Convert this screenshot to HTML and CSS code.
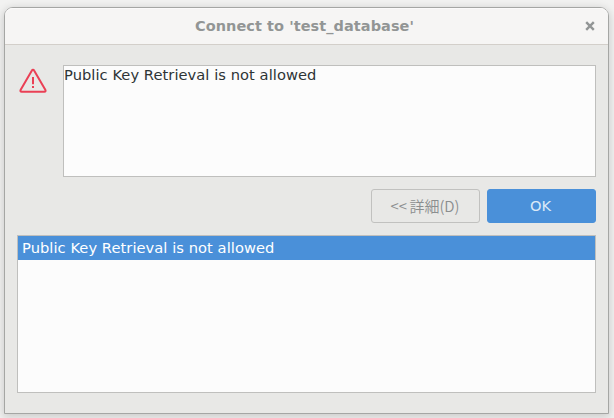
FILE: index.html
```html
<!DOCTYPE html>
<html lang="ja">
<head>
<meta charset="utf-8">
<title>Connect to 'test_database'</title>
<link rel="stylesheet" href="styles.css">
</head>
<body>
<div class="dialog">
  <header class="titlebar">
    <span class="title">Connect to 'test_database'</span>
    <button class="close" aria-label="Close">
      <svg width="10" height="10" viewBox="0 0 10 10"><path d="M1.2 1.2 8.8 8.8M8.8 1.2 1.2 8.8" fill="none" stroke="#929595" stroke-width="2.4"/></svg>
    </button>
  </header>
  <main class="content">
    <div class="message-row">
      <svg class="warning" width="30" height="30" viewBox="-1 -0.6 30 30">
        <path d="M15 4.1Q15.7 4.1 16.1 4.9L27.3 24.2Q28.2 26.1 26.3 26.1H3.7Q1.8 26.1 2.7 24.2L13.9 4.9Q14.3 4.1 15 4.1Z" fill="none" stroke="#ea4055" stroke-width="2" stroke-linejoin="round"/>
        <path d="M14 11.4h2v7.2h-2zM14 20.4h2v2h-2z" fill="#ea4055"/>
      </svg>
      <div class="message">Public Key Retrieval is not allowed</div>
    </div>
    <div class="actions">
      <button class="button details">&lt;&lt; 詳細(D)</button>
      <button class="button ok">OK</button>
    </div>
    <div class="list">
      <div class="item selected">Public Key Retrieval is not allowed</div>
    </div>
  </main>
</div>
</body>
</html>
```
FILE: styles.css
```css
* { box-sizing: border-box; }
body {
  margin: 0;
  padding: 7px 5px 4px 4px;
  height: 418px;
  overflow: hidden;
  background: #f2f2f1;
  font: 14.667px/18px "DejaVu Sans", "Noto Sans CJK JP", sans-serif;
  letter-spacing: 0.055px;
  color: #2e3436;
}
.dialog {
  height: 407px;
  display: flex;
  flex-direction: column;
  border: 1px solid #a5a6a4;
  border-radius: 9px 9px 0 0;
  background: #e8e8e6;
  box-shadow: 0 2px 8px 1px rgba(0, 0, 0, 0.16);
}
.titlebar {
  height: 37px;
  flex: none;
  display: grid;
  grid-template-columns: 30px 1fr 30px;
  align-items: center;
  padding-right: 3px;
  border-bottom: 1px solid #d3cfca;
  border-radius: 8px 8px 0 0;
  background: #f6f5f4;
  box-shadow: inset 0 1px #fbfafa;
}
.title {
  grid-column: 2;
  padding-right: 1px;
  text-align: center;
  font-weight: bold;
  font-size: 14.5px;
  color: #929595;
}
.close {
  display: flex;
  justify-content: center;
  padding: 0;
  border: 0;
  background: none;
}
.content {
  flex: 1;
  display: flex;
  flex-direction: column;
  padding: 20px 12px;
}
.message-row { display: flex; gap: 16px; }
.warning { flex: none; }
.message {
  flex: 1;
  height: 112px;
  border: 1px solid #bfbfbd;
  background: #fcfcfc;
}
.actions {
  display: flex;
  justify-content: flex-end;
  gap: 7px;
  margin: 12px 0;
}
.button {
  width: 109px;
  height: 34px;
  padding: 0 2px 0 0;
  border: 1px solid #c1c1bf;
  border-radius: 3px;
  background: none;
  font: inherit;
}
.details {
  padding-right: 1px;
  font-family: "Noto Sans CJK JP", sans-serif;
  font-size: 15px;
  font-weight: 350;
  letter-spacing: 0;
  word-spacing: -0.8px;
  color: #8b8e8f;
}
.ok {
  border-color: #4a90d9;
  background: #4a90d9;
  color: #dbe9f7;
}
.list {
  height: 158px;
  border: 1px solid #bfbfbd;
  background: #fcfcfc;
}
.item { height: 24px; padding: 3px 4px; }
.selected { background: #4a90d9; color: #fff; }
```
